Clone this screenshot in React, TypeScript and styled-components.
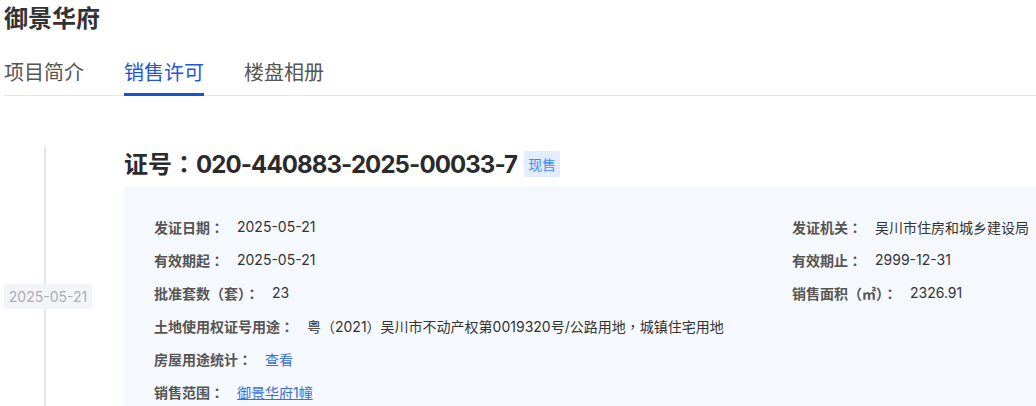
import React from "react";
import styled, { createGlobalStyle } from "styled-components";

const GlobalStyle = createGlobalStyle`
  html, body {
    margin: 0;
    padding: 0;
    background: #ffffff;
    overflow: hidden;
  }
  body {
    font-family: "Inter", "Noto Sans CJK SC", sans-serif;
    color: #333333;
  }
`;

const Page = styled.div`
  padding: 0 0 0 4px;
  width: 1032px;
`;

const Title = styled.h1`
  margin: 0;
  font-size: 24px;
  line-height: 34px;
  font-weight: 700;
  color: #333333;
  font-family: "Noto Sans CJK SC", sans-serif;
`;

const TabBar = styled.div`
  display: flex;
  gap: 40px;
  margin-top: 24px;
  border-bottom: 1px solid #e4e4e4;
`;

const Tab = styled.div<{ $active?: boolean }>`
  font-family: "Noto Sans CJK SC", sans-serif;
  font-size: 20px;
  line-height: 28px;
  padding-bottom: 7px;
  margin-bottom: -1px;
  color: ${(p) => (p.$active ? "#1f56d6" : "#555555")};
  border-bottom: 3px solid ${(p) => (p.$active ? "#1554d1" : "transparent")};
`;

const Timeline = styled.div`
  margin-top: 50px;
`;

const Item = styled.div`
  display: flex;
`;

const Rail = styled.div`
  width: 120px;
  flex: none;
  display: flex;
  flex-direction: column;
`;

const RailLine = styled.div<{ $top?: boolean }>`
  flex: 1;
  width: 2px;
  margin-left: 40px;
  margin-top: ${(p) => (p.$top ? "1px" : "0")};
  background: #e3e6ee;
`;

const DateBox = styled.div`
  width: 88px;
  height: 25px;
  line-height: 25px;
  text-align: center;
  font-size: 14px;
  color: #a9aeb9;
  background: #f3f4f7;
  border-radius: 2px;
`;

const Content = styled.div`
  flex: 1;
`;

const Heading = styled.div`
  display: flex;
  align-items: center;
  height: 36px;
  padding-bottom: 4px;
`;

const HeadingText = styled.h2`
  margin: 0;
  font-size: 24px;
  line-height: 36px;
  font-weight: 700;
  color: #2b2b2b;
  font-family: "Noto Sans CJK SC", sans-serif;
`;

const Number = styled.span`
  font-family: "Inter", sans-serif;
  letter-spacing: -0.9px;
`;

const Punct = styled.span`
  font-family: "Noto Sans CJK TC", "Noto Sans CJK SC", sans-serif;
`;

const Tag = styled.span`
  margin-left: 7px;
  height: 26px;
  line-height: 26px;
  padding: 0 4px;
  font-family: "Noto Sans CJK SC", sans-serif;
  font-size: 14px;
  color: #3d8af7;
  background: #e2edff;
  border-radius: 2px;
`;

const Panel = styled.div`
  background: #f5f8fc;
  padding: 24px 30px 37px;
  display: grid;
  grid-template-columns: 638px auto;
  grid-auto-rows: 33px;
  font-size: 14px;
`;

const Field = styled.div<{ $wide?: boolean }>`
  display: flex;
  align-items: center;
  white-space: nowrap;
  grid-column: ${(p) => (p.$wide ? "1 / -1" : "auto")};
`;

const Label = styled.span`
  font-family: "Noto Sans CJK SC", sans-serif;
  font-weight: 700;
  color: #555555;
  margin-right: 13px;
`;

const Value = styled.span`
  color: #333333;
`;

const Link = styled.a<{ $underline?: boolean }>`
  color: #3b6ddc;
  text-decoration: ${(p) => (p.$underline ? "underline" : "none")};
  cursor: pointer;
`;

function withPunct(text: string): React.ReactNode {
  const parts = text.split(/([：，])/);
  return parts.map((part, i) =>
    part === "：" || part === "，" ? <Punct key={i}>{part}</Punct> : part
  );
}

type Row = { label: string; value: React.ReactNode; wide?: boolean };

const rows: Row[] = [
  { label: "发证日期：", value: "2025-05-21" },
  { label: "发证机关：", value: "吴川市住房和城乡建设局" },
  { label: "有效期起：", value: "2025-05-21" },
  { label: "有效期止：", value: "2999-12-31" },
  { label: "批准套数（套）：", value: "23" },
  { label: "销售面积（㎡）：", value: "2326.91" },
  {
    label: "土地使用权证号用途：",
    value: withPunct("粤（2021）吴川市不动产权第0019320号/公路用地，城镇住宅用地"),
    wide: true,
  },
  { label: "房屋用途统计：", value: <Link>查看</Link>, wide: true },
  { label: "销售范围：", value: <Link $underline>御景华府1幢</Link>, wide: true },
];

export default function App() {
  return (
    <>
      <GlobalStyle />
      <Page>
        <Title>御景华府</Title>
        <TabBar>
          <Tab>项目简介</Tab>
          <Tab $active>销售许可</Tab>
          <Tab>楼盘相册</Tab>
        </TabBar>
        <Timeline>
          <Item>
            <Rail>
              <RailLine $top />
              <DateBox>2025-05-21</DateBox>
              <RailLine />
            </Rail>
            <Content>
              <Heading>
                <HeadingText>
                  证号<Punct>：</Punct>
                  <Number>020-440883-2025-00033-7</Number>
                </HeadingText>
                <Tag>现售</Tag>
              </Heading>
              <Panel>
                {rows.map((r) => (
                  <Field key={r.label} $wide={r.wide}>
                    <Label>{withPunct(r.label)}</Label>
                    <Value>{r.value}</Value>
                  </Field>
                ))}
              </Panel>
            </Content>
          </Item>
        </Timeline>
      </Page>
    </>
  );
}
